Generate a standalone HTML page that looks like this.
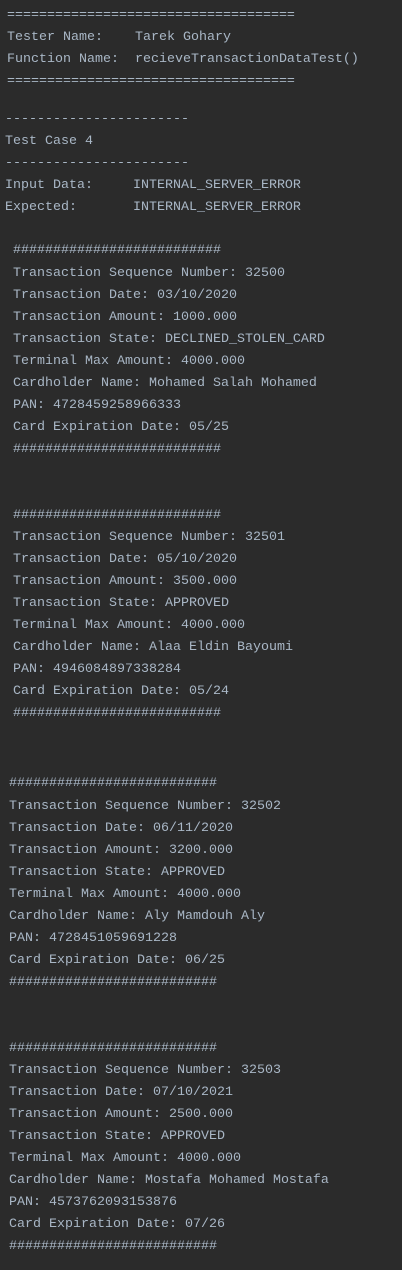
<!DOCTYPE html>
<html><head><meta charset="utf-8"><style>
html,body{margin:0;padding:0;background:#2b2b2b;width:402px;height:1268px;overflow:hidden}
body{position:relative;top:2px}
.l{position:absolute;white-space:pre;font-family:"Liberation Mono",monospace;font-size:13.33px;line-height:22px;color:#a9b7c6;height:22px}
</style></head><body>
<div class="l" style="left:7px;top:3px">====================================</div>
<div class="l" style="left:7px;top:25px">Tester Name:    Tarek Gohary</div>
<div class="l" style="left:7px;top:47px">Function Name:  recieveTransactionDataTest()</div>
<div class="l" style="left:7px;top:69px">====================================</div>
<div class="l" style="left:5px;top:107px">-----------------------</div>
<div class="l" style="left:5px;top:129px">Test Case 4</div>
<div class="l" style="left:5px;top:151px">-----------------------</div>
<div class="l" style="left:5px;top:173px">Input Data:     INTERNAL_SERVER_ERROR</div>
<div class="l" style="left:5px;top:195px">Expected:       INTERNAL_SERVER_ERROR</div>

<div class="l" style="left:13px;top:238px">##########################</div>
<div class="l" style="left:13px;top:261px">Transaction Sequence Number: 32500</div>
<div class="l" style="left:13px;top:283px">Transaction Date: 03/10/2020</div>
<div class="l" style="left:13px;top:305px">Transaction Amount: 1000.000</div>
<div class="l" style="left:13px;top:327px">Transaction State: DECLINED_STOLEN_CARD</div>
<div class="l" style="left:13px;top:349px">Terminal Max Amount: 4000.000</div>
<div class="l" style="left:13px;top:371px">Cardholder Name: Mohamed Salah Mohamed</div>
<div class="l" style="left:13px;top:393px">PAN: 4728459258966333</div>
<div class="l" style="left:13px;top:415px">Card Expiration Date: 05/25</div>
<div class="l" style="left:13px;top:437px">##########################</div>

<div class="l" style="left:13px;top:503px">##########################</div>
<div class="l" style="left:13px;top:525px">Transaction Sequence Number: 32501</div>
<div class="l" style="left:13px;top:547px">Transaction Date: 05/10/2020</div>
<div class="l" style="left:13px;top:569px">Transaction Amount: 3500.000</div>
<div class="l" style="left:13px;top:591px">Transaction State: APPROVED</div>
<div class="l" style="left:13px;top:613px">Terminal Max Amount: 4000.000</div>
<div class="l" style="left:13px;top:635px">Cardholder Name: Alaa Eldin Bayoumi</div>
<div class="l" style="left:13px;top:657px">PAN: 4946084897338284</div>
<div class="l" style="left:13px;top:679px">Card Expiration Date: 05/24</div>
<div class="l" style="left:13px;top:701px">##########################</div>

<div class="l" style="left:9px;top:771px">##########################</div>
<div class="l" style="left:9px;top:794px">Transaction Sequence Number: 32502</div>
<div class="l" style="left:9px;top:816px">Transaction Date: 06/11/2020</div>
<div class="l" style="left:9px;top:838px">Transaction Amount: 3200.000</div>
<div class="l" style="left:9px;top:860px">Transaction State: APPROVED</div>
<div class="l" style="left:9px;top:882px">Terminal Max Amount: 4000.000</div>
<div class="l" style="left:9px;top:904px">Cardholder Name: Aly Mamdouh Aly</div>
<div class="l" style="left:9px;top:926px">PAN: 4728451059691228</div>
<div class="l" style="left:9px;top:948px">Card Expiration Date: 06/25</div>
<div class="l" style="left:9px;top:970px">##########################</div>

<div class="l" style="left:9px;top:1036px">##########################</div>
<div class="l" style="left:9px;top:1058px">Transaction Sequence Number: 32503</div>
<div class="l" style="left:9px;top:1080px">Transaction Date: 07/10/2021</div>
<div class="l" style="left:9px;top:1102px">Transaction Amount: 2500.000</div>
<div class="l" style="left:9px;top:1124px">Transaction State: APPROVED</div>
<div class="l" style="left:9px;top:1146px">Terminal Max Amount: 4000.000</div>
<div class="l" style="left:9px;top:1168px">Cardholder Name: Mostafa Mohamed Mostafa</div>
<div class="l" style="left:9px;top:1190px">PAN: 4573762093153876</div>
<div class="l" style="left:9px;top:1212px">Card Expiration Date: 07/26</div>
<div class="l" style="left:9px;top:1234px">##########################</div>
</body></html>
